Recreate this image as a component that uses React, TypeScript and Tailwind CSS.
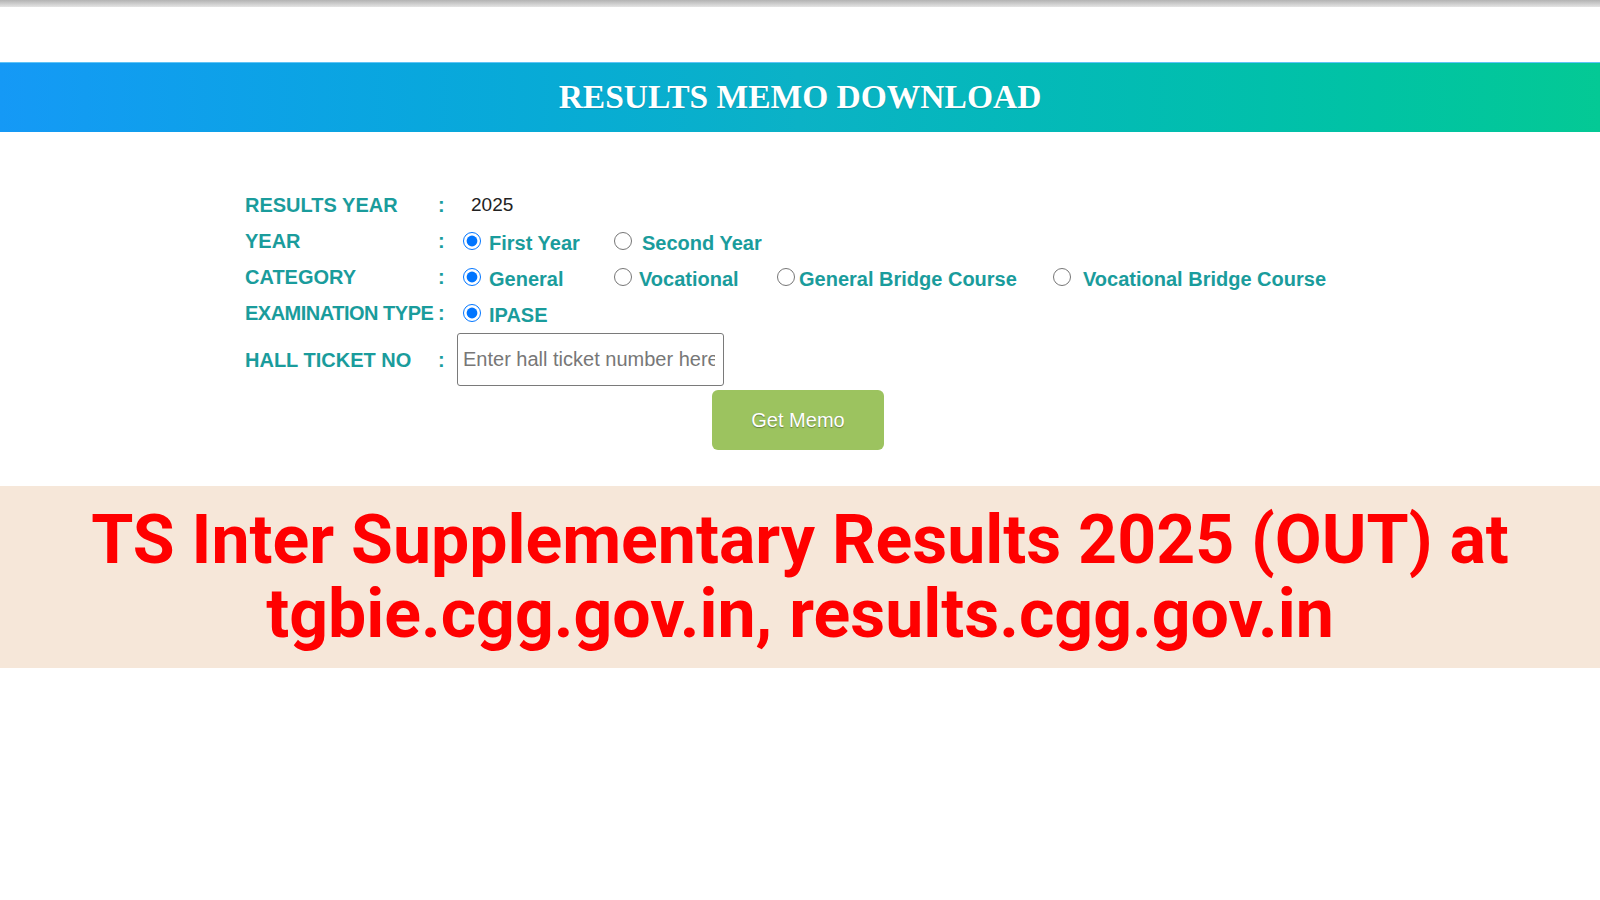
import React from 'react'

const SANS = { fontFamily: '"Liberation Sans", Arial, sans-serif' }

type Opt = { label: string; width?: string; gap: string; checked?: boolean }

const YEAR_OPTS: Opt[] = [
  { label: 'First Year', width: 'w-[151px]', gap: 'mr-[8px]', checked: true },
  { label: 'Second Year', gap: 'mr-[10px]' },
]

const CATEGORY_OPTS: Opt[] = [
  { label: 'General', width: 'w-[151px]', gap: 'mr-[8px]', checked: true },
  { label: 'Vocational', width: 'w-[163px]', gap: 'mr-[7px]' },
  { label: 'General Bridge Course', width: 'w-[276px]', gap: 'mr-[4px]' },
  { label: 'Vocational Bridge Course', gap: 'mr-[12px]' },
]

function Label({ children, tight }: { children: React.ReactNode; tight?: boolean }) {
  return (
    <>
      <span
        className={`w-[193px] shrink-0 whitespace-nowrap text-[20px] font-bold text-[#1a9c9c] ${
          tight ? 'tracking-[-0.5px]' : ''
        }`}
      >
        {children}
      </span>
      <span className="w-[19px] shrink-0 text-[20px] font-bold text-[#1a9c9c]">:</span>
    </>
  )
}

function Radio({ name, opt }: { name: string; opt: Opt }) {
  return (
    <label className={`flex shrink-0 items-center ${opt.width ?? ''}`}>
      <input
        type="radio"
        name={name}
        defaultChecked={opt.checked}
        className={`ml-[6px] h-[18px] w-[18px] shrink-0 ${opt.gap}`}
      />
      <span className="mt-[3px] whitespace-nowrap text-[20px] font-bold text-[#1a9c9c]">
        {opt.label}
      </span>
    </label>
  )
}

export default function App() {
  return (
    <div className="min-h-[900px] w-full bg-white" style={SANS}>
      {/* top shadow strip */}
      <div className="h-[7px] bg-linear-to-b from-[#b3b3b3] to-[#e4e4e4]" />
      <div className="h-[55px]" />

      {/* header */}
      <div className="flex h-[70px] items-center justify-center border-t border-[#5fc3f7] bg-linear-to-r from-[#1599f6] via-[#0bb2c6] to-[#04c995]">
        <h1
          className="text-[33.5px] font-bold text-white [text-shadow:0_1px_1px_rgba(0,0,0,0.15)]"
          style={{ fontFamily: '"Liberation Serif", "Times New Roman", serif' }}
        >
          RESULTS MEMO DOWNLOAD
        </h1>
      </div>

      {/* form */}
      <div className="flex flex-col pl-[245px] pt-[55px]">
        <div className="flex h-[36px] items-center">
          <Label>RESULTS YEAR</Label>
          <span className="pl-[14px] text-[19px] text-[#222]">2025</span>
        </div>
        <div className="flex h-[36px] items-center">
          <Label>YEAR</Label>
          {YEAR_OPTS.map((o) => (
            <Radio key={o.label} name="year" opt={o} />
          ))}
        </div>
        <div className="flex h-[36px] items-center">
          <Label>CATEGORY</Label>
          {CATEGORY_OPTS.map((o) => (
            <Radio key={o.label} name="category" opt={o} />
          ))}
        </div>
        <div className="flex h-[36px] items-center">
          <Label tight>EXAMINATION TYPE</Label>
          <Radio name="exam" opt={{ label: 'IPASE', gap: 'mr-[8px]', checked: true }} />
        </div>
        <div className="mt-[2px] flex h-[53px] items-center">
          <Label>HALL TICKET NO</Label>
          <input
            type="text"
            placeholder="Enter hall ticket number here"
            className="h-[53px] w-[267px] rounded-[3px] border border-[#7a7a7a] pl-[5px] pr-[8px] text-[20px] text-[#333] outline-none placeholder:text-[#777]"
          />
        </div>
      </div>

      <div className="mt-[4px] flex justify-center pr-[4px]">
        <button className="h-[60px] w-[172px] rounded-[6px] bg-[#9cc35f] text-[20px] text-white [text-shadow:0_1px_1px_rgba(0,0,0,0.35)]">
          Get Memo
        </button>
      </div>

      {/* banner */}
      <div className="mt-[36px] bg-[#f6e7d9] pb-[17px] pt-[17px]">
        <p
          className="text-center text-[68px] font-bold leading-[74px] text-[#ff0000]"
          style={{ fontFamily: 'Roboto, "Noto Sans", sans-serif' }}
        >
          TS Inter Supplementary Results 2025 (OUT) at
          <br />
          tgbie.cgg.gov.in, results.cgg.gov.in
        </p>
      </div>
    </div>
  )
}
